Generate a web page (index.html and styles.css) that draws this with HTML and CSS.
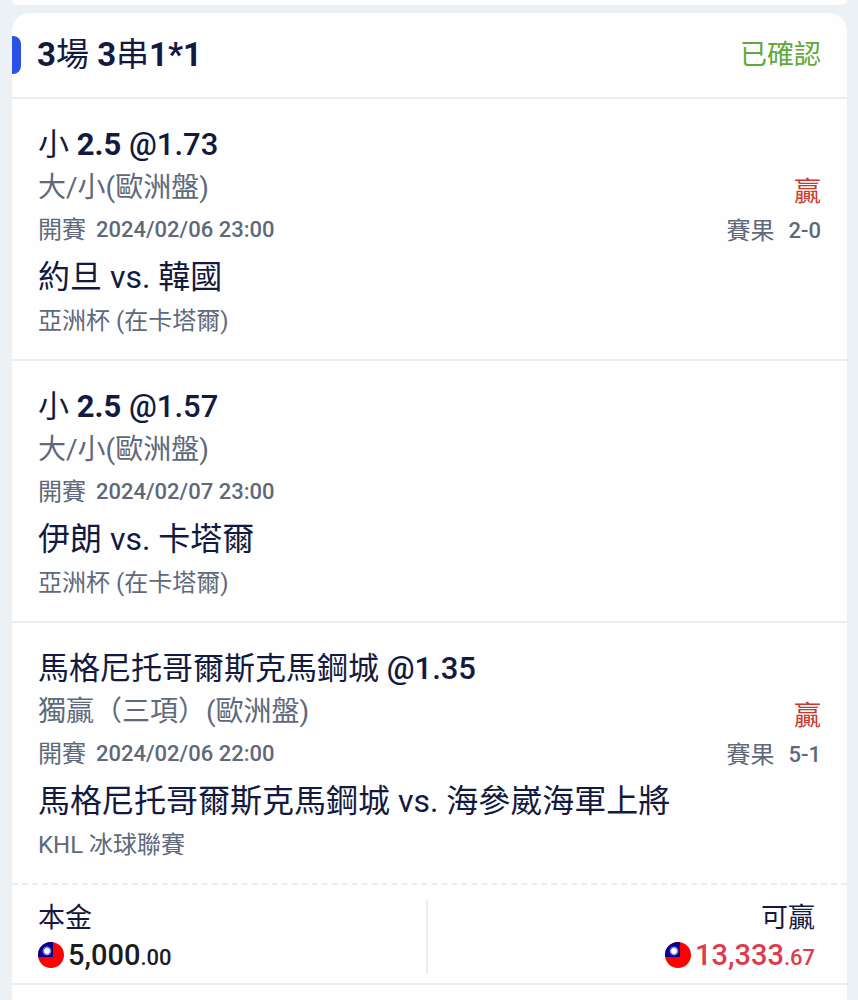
FILE: index.html
```html
<!DOCTYPE html>
<html lang="zh-Hant">
<head>
  <meta charset="UTF-8" />
  <meta name="viewport" content="width=device-width, initial-scale=1.0" />
  <title>注單</title>
  <link rel="stylesheet" href="styles.css">
</head>
<body>
  <svg class="sprite" aria-hidden="true">
    <symbol id="flag-tw" viewBox="0 0 26 26">
      <rect width="26" height="26" fill="#fe0000" />
      <rect width="15" height="15" fill="#000095" />
      <path d="M9 4 L9.8 6.1 L11.5 4.7 L11.1 6.9 L13.3 6.5 L11.9 8.2 L14 9 L11.9 9.8 L13.3 11.5 L11.1 11.1 L11.5 13.3 L9.8 11.9 L9 14 L8.2 11.9 L6.5 13.3 L6.9 11.1 L4.7 11.5 L6.1 9.8 L4 9 L6.1 8.2 L4.7 6.5 L6.9 6.9 L6.5 4.7 L8.2 6.1 Z" fill="#fff" />
      <circle cx="9" cy="9" r="2.9" fill="#fff" stroke="#8f93d8" stroke-width="0.4" />
    </symbol>
  </svg>

  <div class="card card-prev"></div>

  <main class="card">
    <header class="card-header">
      <h1><b>3</b>場 <b>3</b>串<b>1*1</b></h1>
      <span class="status">已確認</span>
    </header>

    <section class="bet">
      <h2>小 <b>2.5</b> <span class="odds">@1.73</span></h2>
      <div class="bet-info">
        <div>
          <p class="market">大/小(歐洲盤)</p>
          <p class="meta">開賽 <time datetime="2024-02-06T23:00">2024/02/06 23:00</time></p>
        </div>
        <div class="result">
          <p class="win">贏</p>
          <p class="meta">賽果 <span class="score">2-0</span></p>
        </div>
      </div>
      <p class="teams">約旦 vs. 韓國</p>
      <p class="league">亞洲杯 (在卡塔爾)</p>
    </section>

    <section class="bet">
      <h2>小 <b>2.5</b> <span class="odds">@1.57</span></h2>
      <div class="bet-info">
        <div>
          <p class="market">大/小(歐洲盤)</p>
          <p class="meta">開賽 <time datetime="2024-02-07T23:00">2024/02/07 23:00</time></p>
        </div>
      </div>
      <p class="teams">伊朗 vs. 卡塔爾</p>
      <p class="league">亞洲杯 (在卡塔爾)</p>
    </section>

    <section class="bet">
      <h2>馬格尼托哥爾斯克馬鋼城 <span class="odds">@1.35</span></h2>
      <div class="bet-info">
        <div>
          <p class="market">獨贏（三項）(歐洲盤)</p>
          <p class="meta">開賽 <time datetime="2024-02-06T22:00">2024/02/06 22:00</time></p>
        </div>
        <div class="result">
          <p class="win">贏</p>
          <p class="meta">賽果 <span class="score">5-1</span></p>
        </div>
      </div>
      <p class="teams">馬格尼托哥爾斯克馬鋼城 vs. 海參崴海軍上將</p>
      <p class="league">KHL 冰球聯賽</p>
    </section>

    <footer class="totals">
      <div class="total">
        <p class="label">本金</p>
        <p class="amount"><svg class="flag" aria-hidden="true"><use href="#flag-tw" /></svg><span>5,000<small>.00</small></span></p>
      </div>
      <div class="total total-win">
        <p class="label">可贏</p>
        <p class="amount"><svg class="flag" aria-hidden="true"><use href="#flag-tw" /></svg><span>13,333<small>.67</small></span></p>
      </div>
    </footer>
  </main>
</body>
</html>
```

FILE: styles.css
```css
* {
  box-sizing: border-box;
}

body {
  display: flex;
  flex-direction: column;
  gap: 8px;
  min-height: 100vh;
  margin: 0;
  padding: 0 11px 0 12px;
  background: #ecf1f5;
  color: #141a3f;
  font-family: Roboto, "Noto Sans CJK TC", sans-serif;
  font-weight: 400;
}

h1, h2, p {
  margin: 0;
  font-weight: 400;
}

.sprite {
  display: none;
}

.card {
  flex: 1;
  background: #fefefe;
  border-radius: 18px 18px 0 0;
}

.card-prev {
  flex: none;
  height: 5px;
  border-radius: 0 0 18px 18px;
}

.card-header {
  display: flex;
  align-items: center;
  justify-content: space-between;
  height: 86px;
  padding-right: 26px;
  border-bottom: 2px solid #e9eef3;
}

.card-header h1 {
  display: flex;
  align-items: center;
  font-size: 33px;
  line-height: 38px;
  white-space: pre;
}

/* blue marker on the card edge */
.card-header h1::before {
  content: "";
  width: 9px;
  height: 38px;
  margin-right: 16px;
  background: #2b50e6;
  border-radius: 0 8px 8px 0;
}

.status {
  color: #5fa83c;
  font-size: 27px;
  line-height: 38px;
}

.bet {
  padding: 24px 26px 20px;
  border-bottom: 2px solid #e9eef3;
}

.bet:last-of-type {
  border-bottom: 2px dashed #e9eef3;
}

.bet h2 {
  font-size: 31px;
  line-height: 44px;
}

.odds {
  font-weight: 500;
}

.bet-info {
  display: flex;
  align-items: flex-end;
  justify-content: space-between;
  color: #5f697b;
}

.market {
  font-size: 28px;
  line-height: 42px;
}

.meta {
  display: flex;
  gap: 10px;
  font-size: 24px;
  line-height: 42px;
}

.meta time,
.score {
  font-size: 22px;
  font-weight: 500;
}

.result .win {
  color: #c8382c;
  font-size: 27px;
  line-height: 38px;
  text-align: right;
}

.result .meta {
  gap: 14px;
  line-height: 40px;
}

.teams {
  font-size: 32px;
  line-height: 52px;
}

.league {
  color: #5f697b;
  font-size: 24px;
  line-height: 36px;
}

.totals {
  display: flex;
  padding: 15px 26px 9px;
  border-bottom: 2px solid #e9eef3;
}

.total {
  flex: 1;
}

.total + .total {
  border-left: 2px solid #e9eef3;
}

.total-win {
  padding-right: 6px;
  text-align: right;
}

.label {
  font-size: 27px;
  line-height: 36px;
}

.amount {
  display: flex;
  align-items: center;
  gap: 4px;
  color: #1c1c1e;
  font-size: 29px;
  font-weight: 500;
  line-height: 38px;
}

.amount small {
  font-size: 22px;
  line-height: 1;
}

.total-win .amount {
  justify-content: flex-end;
  color: #dc3b4c;
}

.flag {
  width: 26px;
  height: 26px;
  border-radius: 50%;
}
```
